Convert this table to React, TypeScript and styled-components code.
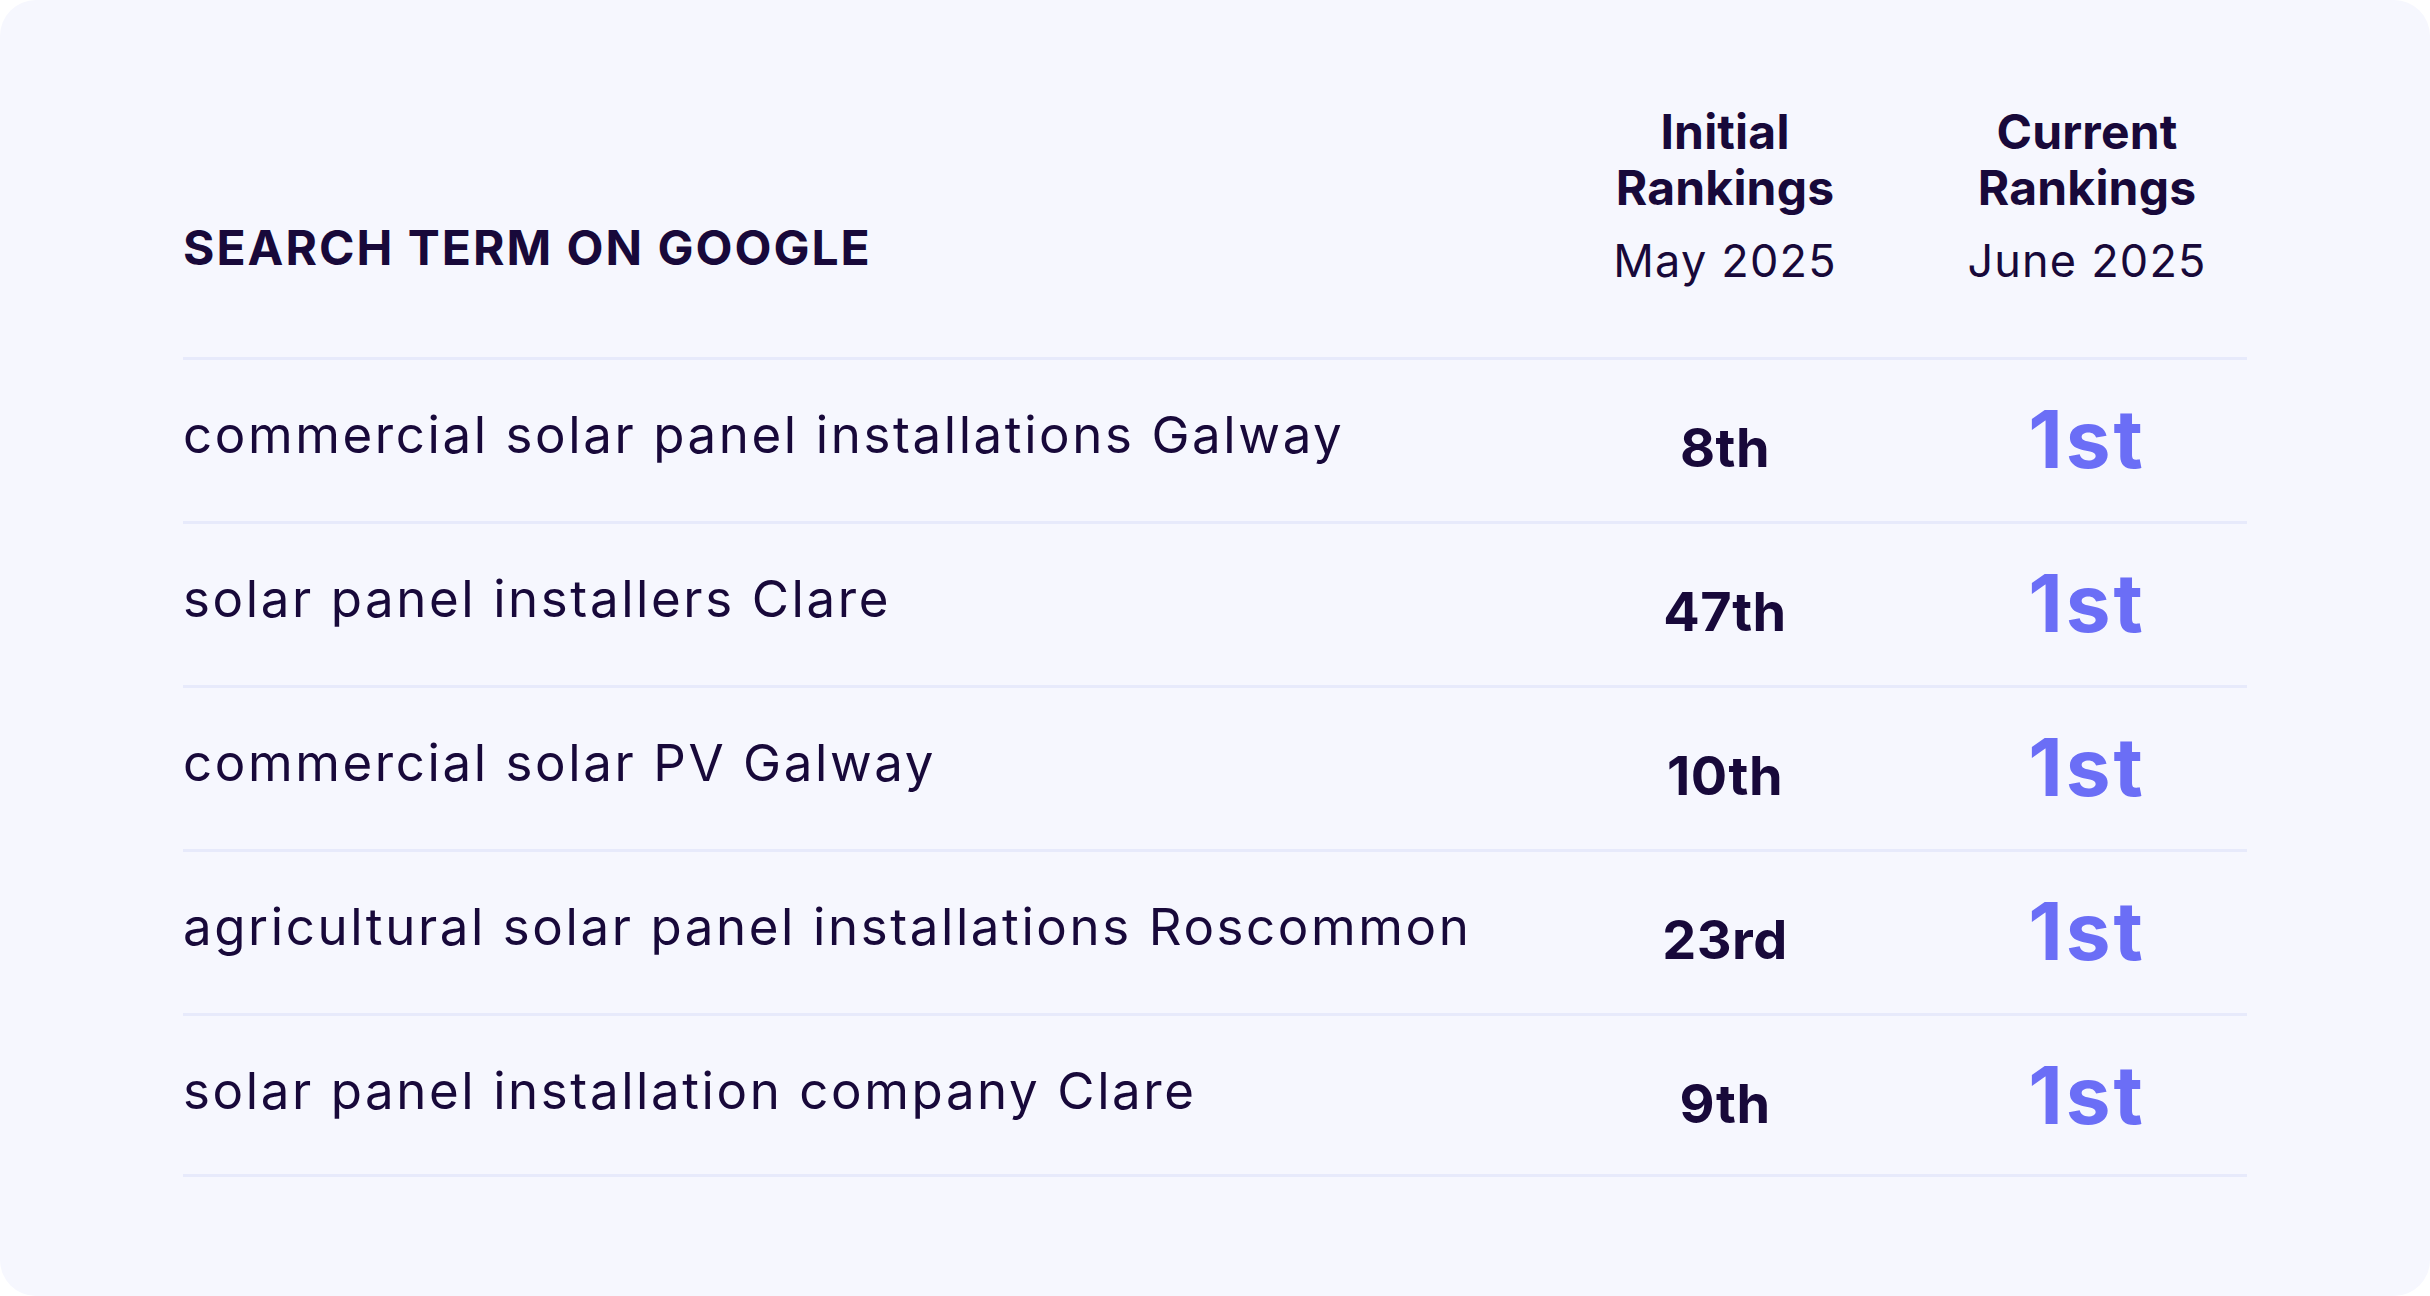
import React from "react";
import styled, { createGlobalStyle } from "styled-components";

const GlobalStyle = createGlobalStyle`
  * {
    box-sizing: border-box;
  }
  html, body {
    margin: 0;
    padding: 0;
    background: #ffffff;
  }
  body {
    font-family: Inter, "Open Sans", "Liberation Sans", sans-serif;
    color: #18093a;
  }
`;

const Card = styled.section`
  min-height: 100vh;
  background: #f6f7fe;
  border-radius: 36px;
  padding: 104px 183px 0;
`;

const Table = styled.div`
  display: flex;
  flex-direction: column;
`;

const HeaderRow = styled.div`
  display: grid;
  grid-template-columns: 1fr 404px 320px;
  align-items: end;
  padding-bottom: 68px;
`;

const TermHeading = styled.h2`
  margin: 0 0 13px;
  font-size: 48px;
  line-height: 56px;
  font-weight: 700;
  letter-spacing: 2px;
  text-transform: uppercase;
`;

const ColHeading = styled.div`
  display: flex;
  flex-direction: column;
  align-items: center;
  text-align: center;
`;

const ColTitle = styled.span`
  font-size: 48px;
  line-height: 56px;
  font-weight: 700;
  letter-spacing: 0.2px;
`;

const ColDate = styled.span`
  margin-top: 17px;
  font-size: 45px;
  line-height: 56px;
  font-weight: 400;
  letter-spacing: 1.2px;
`;

const Row = styled.div`
  display: grid;
  grid-template-columns: 1fr 404px 320px;
  align-items: start;
  height: 164px;
  border-top: 3px solid #e7eafb;

  &:last-child {
    border-bottom: 3px solid #e7eafb;
  }
`;

const Term = styled.div`
  padding-top: 45px;
  font-size: 51px;
  line-height: 60px;
  font-weight: 400;
  letter-spacing: 2.6px;
  white-space: nowrap;
`;

const Rank = styled.div<{ $current?: boolean }>`
  text-align: center;
  font-weight: 700;
  white-space: nowrap;
  padding-top: ${(p) => (p.$current ? "39px" : "56px")};
  font-size: ${(p) => (p.$current ? "80px" : "54px")};
  line-height: ${(p) => (p.$current ? "80px" : "64px")};
  color: ${(p) => (p.$current ? "#6b6ef6" : "#18093a")};
  letter-spacing: ${(p) => (p.$current ? "3px" : "0.5px")};
`;

const rows = [
  { term: "commercial solar panel installations Galway", initial: "8th", current: "1st" },
  { term: "solar panel installers Clare", initial: "47th", current: "1st" },
  { term: "commercial solar PV Galway", initial: "10th", current: "1st" },
  { term: "agricultural solar panel installations Roscommon", initial: "23rd", current: "1st" },
  { term: "solar panel installation company Clare", initial: "9th", current: "1st" },
];

export default function App() {
  return (
    <>
      <GlobalStyle />
      <Card>
        <Table>
          <HeaderRow>
            <TermHeading>Search term on Google</TermHeading>
            <ColHeading>
              <ColTitle>Initial</ColTitle>
              <ColTitle>Rankings</ColTitle>
              <ColDate>May 2025</ColDate>
            </ColHeading>
            <ColHeading>
              <ColTitle>Current</ColTitle>
              <ColTitle>Rankings</ColTitle>
              <ColDate>June 2025</ColDate>
            </ColHeading>
          </HeaderRow>
          {rows.map((r) => (
            <Row key={r.term}>
              <Term>{r.term}</Term>
              <Rank>{r.initial}</Rank>
              <Rank $current>{r.current}</Rank>
            </Row>
          ))}
        </Table>
      </Card>
    </>
  );
}
